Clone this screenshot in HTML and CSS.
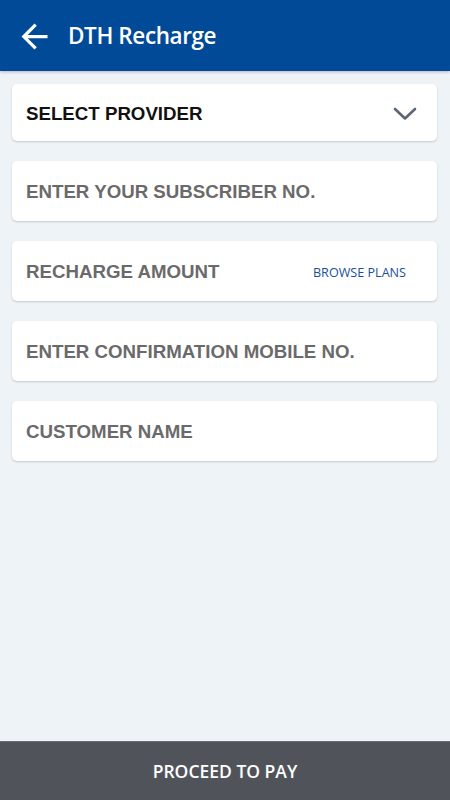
FILE: index.html
```html
<!DOCTYPE html>
<html lang="en">
<head>
    <meta charset="UTF-8">
    <meta name="viewport" content="width=device-width, initial-scale=1.0">
    <title>DTH Recharge</title>
    <link rel="stylesheet" href="styles.css">
</head>
<body>
    <div class="app">
        <header class="topbar">
            <button class="back-button" aria-label="Back">
                <svg width="39" height="39" viewBox="0 0 24 24">
                    <path fill="#fff" d="M20 11H7.83l5.59-5.59L12 4l-8 8 8 8 1.41-1.41L7.83 13H20v-2z"/>
                </svg>
            </button>
            <h1 class="title">DTH Recharge</h1>
        </header>

        <main class="form">
            <div class="field field-select">
                <span class="field-label dark">SELECT PROVIDER</span>
                <svg class="chevron" width="24" height="14" viewBox="0 0 24 14">
                    <polyline points="2,2 12,11.5 22,2" fill="none" stroke="#5b6672" stroke-width="2.6" stroke-linecap="round" stroke-linejoin="round"/>
                </svg>
            </div>
            <div class="field">
                <span class="field-label">ENTER YOUR SUBSCRIBER NO.</span>
            </div>
            <div class="field">
                <span class="field-label">RECHARGE AMOUNT</span>
                <a class="browse-link" href="#">BROWSE PLANS</a>
            </div>
            <div class="field">
                <span class="field-label">ENTER CONFIRMATION MOBILE NO.</span>
            </div>
            <div class="field">
                <span class="field-label">CUSTOMER NAME</span>
            </div>
        </main>

        <footer class="pay-bar">
            <button class="pay-button">PROCEED TO PAY</button>
        </footer>
    </div>
</body>
</html>
```

FILE: styles.css
```css
* {
    box-sizing: border-box;
}

body {
    margin: 0;
    font-family: "Open Sans", "Liberation Sans", sans-serif;
    background-color: #eef3f8;
}

.app {
    display: flex;
    flex-direction: column;
    height: 100vh;
}

.topbar {
    display: flex;
    align-items: center;
    height: 71px;
    padding: 0 0 0 15px;
    background-color: #004a98;
    box-shadow: 0 1px 3px rgba(0, 0, 0, 0.25);
    position: relative;
    z-index: 1;
}

.back-button {
    display: flex;
    padding: 0;
    margin: 1px 0 0 0;
    background: none;
    border: none;
    cursor: pointer;
}

.title {
    margin: 0 0 0 14px;
    color: white;
    font-size: 22.5px;
    font-weight: 600;
    letter-spacing: -0.4px;
}

.form {
    flex: 1;
    display: flex;
    flex-direction: column;
    gap: 20px;
    padding: 13px 13px 0 12px;
}

.field {
    display: flex;
    align-items: center;
    justify-content: space-between;
    height: 60px;
    padding: 2px 31px 0 14px;
    background-color: white;
    border-radius: 5px;
    box-shadow: 0 1px 2px rgba(0, 0, 0, 0.18);
}

.field-select {
    height: 57px;
    padding-right: 20px;
}

.field-label {
    font-family: "Liberation Sans", Arial, sans-serif;
    font-weight: bold;
    font-size: 18.7px;
    color: #6a6a6a;
}

.field-label.dark {
    color: #111;
}

.chevron {
    margin-top: 1px;
}

.browse-link {
    font-size: 12.6px;
    color: #1a4f9a;
    text-decoration: none;
}

.pay-bar {
    height: 59px;
    background-color: #50545a;
    border-top: 1px solid #6b6f74;
}

.pay-button {
    width: 100%;
    height: 100%;
    background: none;
    border: none;
    color: white;
    font-family: "Open Sans", sans-serif;
    font-size: 17.5px;
    font-weight: 600;
    letter-spacing: 0;
    cursor: pointer;
}
```
